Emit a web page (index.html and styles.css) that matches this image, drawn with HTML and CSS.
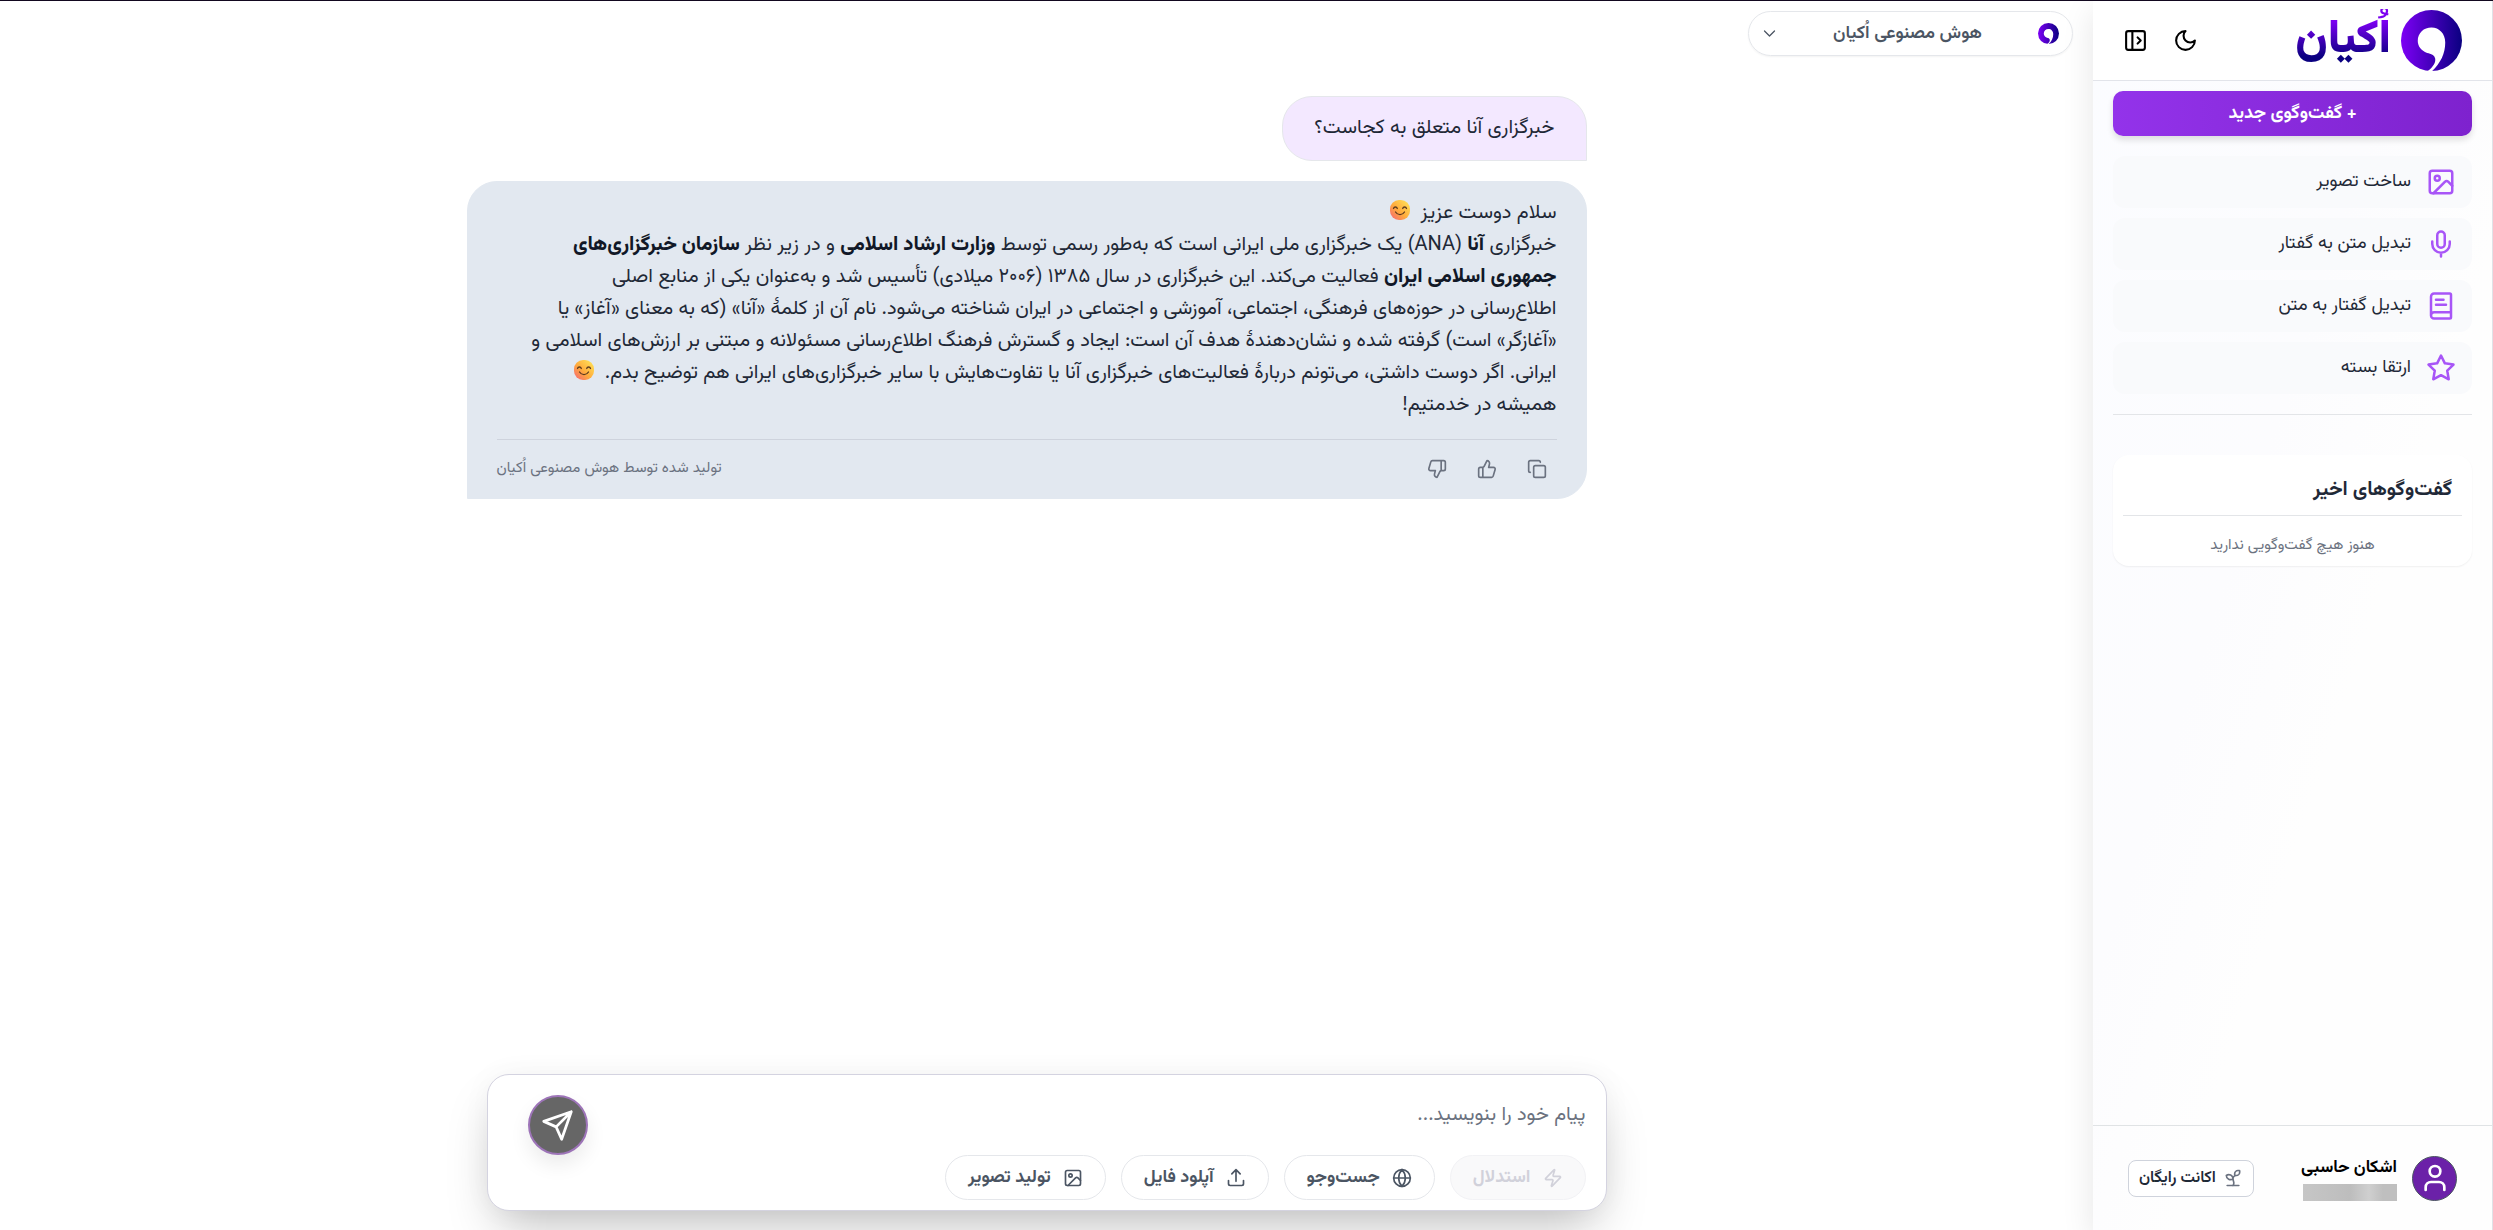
FILE: index.html
```html
<!DOCTYPE html>
<html lang="fa" dir="rtl">
<head>
<meta charset="utf-8">
<meta name="viewport" content="width=device-width, initial-scale=1">
<title>اُکیان</title>
<link rel="stylesheet" href="styles.css">
</head>
<body>
<svg class="defs" aria-hidden="true">
  <defs>
    <linearGradient id="brand" x1="0" x2="1" y1="0" y2="0"><stop offset="0" stop-color="#7d00f5"/><stop offset="1" stop-color="#0a0080"/></linearGradient>
    <linearGradient id="smile" x1="1" x2="0" y1="0" y2="1"><stop offset="0" stop-color="#ffe95a"/><stop offset=".55" stop-color="#ffab3d"/><stop offset="1" stop-color="#f5607a"/></linearGradient>
    <symbol id="logo" viewBox="0 0 182 182"><circle cx="91" cy="91" r="91" fill="url(#brand)"/><path fill="#fff" d="M91 52C114 52 132 70 132 97C132 130 118 158 93 182L80 182C96 170 104 158 102 145C100 134 90 130 78 128C60 122 50 108 50 92C50 68 68 52 91 52Z"/></symbol>
    <symbol id="emoji" viewBox="0 0 20 20"><rect x="0" y="0" width="20" height="20" rx="9" fill="url(#smile)"/><path d="M3.500 8.500c.6-2 3.200-2 3.800 0M12.700 8.500c.6-2 3.200-2 3.800 0M5.500 12c2 3.400 7 3.400 9 0" fill="none" stroke="#5c3a1e" stroke-width="1.300" stroke-linecap="round"/></symbol>
    <symbol id="image" viewBox="0 0 24 24"><rect x="3" y="3" width="18" height="18" rx="2"/><circle cx="9" cy="9" r="2"/><path d="m21 15-3.086-3.086a2 2 0 0 0-2.828 0L6 21"/></symbol>
  </defs>
</svg>
<div class="app">
  <aside class="sidebar">
    <header class="brand-bar">
      <a class="brand" href="#"><svg class="brand-mark"><use href="#logo"/></svg><span class="brand-name">اُکیان</span></a>
      <div class="brand-tools">
        <button class="tool" aria-label="حالت تیره"><svg class="icon" viewBox="0 0 24 24"><path d="M12 3a6 6 0 0 0 9 9 9 9 0 1 1-9-9Z"/></svg></button>
        <button class="tool" aria-label="بستن منو"><svg class="icon" viewBox="0 0 24 24"><rect x="3" y="3" width="18" height="18" rx="2"/><path d="M9 3v18m5-12 3 3-3 3"/></svg></button>
      </div>
    </header>
    <div class="side-body">
      <button class="new-chat">+ گفت‌وگوی جدید</button>
      <nav class="menu">
        <a class="menu-item" href="#"><svg class="icon"><use href="#image"/></svg>ساخت تصویر</a>
        <a class="menu-item" href="#"><svg class="icon" viewBox="0 0 24 24"><path d="M12 2a3 3 0 0 0-3 3v7a3 3 0 0 0 6 0V5a3 3 0 0 0-3-3Z"/><path d="M19 10v2a7 7 0 0 1-14 0v-2M12 19v3"/></svg>تبدیل متن به گفتار</a>
        <a class="menu-item" href="#"><svg class="icon" viewBox="0 0 24 24"><path d="M4 19.500v-15A2.500 2.500 0 0 1 6.500 2H19a1 1 0 0 1 1 1v18a1 1 0 0 1-1 1H6.500a1 1 0 0 1 0-5H20M8 11h8M8 7h6"/></svg>تبدیل گفتار به متن</a>
        <a class="menu-item" href="#"><svg class="icon" viewBox="0 0 24 24"><path d="M12 2l3.090 6.260L22 9.270l-5 4.870 1.180 6.880L12 17.770l-6.180 3.250L7 14.140 2 9.270l6.910-1.010z"/></svg>ارتقا بسته</a>
      </nav>
      <section class="recent">
        <h2 class="recent-title">گفت‌وگوهای اخیر</h2>
        <p class="recent-empty">هنوز هیچ گفت‌وگویی ندارید</p>
      </section>
    </div>
    <footer class="account">
      <span class="avatar"><svg class="icon" viewBox="0 0 24 24"><path d="M19 21v-2a4 4 0 0 0-4-4H9a4 4 0 0 0-4 4v2"/><circle cx="12" cy="7" r="4"/></svg></span>
      <div class="account-info"><span class="account-name">اشکان حاسبی</span><span class="account-mask"></span></div>
      <button class="plan"><svg class="icon" viewBox="0 0 24 24"><path d="M14 9.536V7a4 4 0 0 1 4-4h1.500a.5.5 0 0 1 .5.5V5a4 4 0 0 1-4 4 4 4 0 0 0-4 4c0 2 1 3 1 5a5 5 0 0 1-1 3M4 9a5 5 0 0 1 8 4 5 5 0 0 1-8-4M5 21h14"/></svg>اکانت رایگان</button>
    </footer>
  </aside>
  <main class="main">
    <div class="topbar">
      <label class="model"><svg class="model-mark"><use href="#logo"/></svg>
        <select class="model-select" aria-label="مدل"><option>هوش مصنوعی اُکیان</option></select>
        <svg class="icon chevron" viewBox="0 0 24 24"><path d="m4 8 8 8 8-8"/></svg></label>
    </div>
    <div class="thread">
      <div class="bubble bubble-user">خبرگزاری آنا متعلق به کجاست؟</div>
      <article class="bubble bubble-bot">
        <p class="answer">سلام دوست عزیز <svg class="emoji"><use href="#emoji"/></svg><br>
          خبرگزاری <strong>آنا</strong> (ANA) یک خبرگزاری ملی ایرانی است که به‌طور رسمی توسط <strong>وزارت ارشاد اسلامی</strong> و در زیر نظر <strong>سازمان خبرگزاری‌های<br>
          جمهوری اسلامی ایران</strong> فعالیت می‌کند. این خبرگزاری در سال ۱۳۸۵ (۲۰۰۶ میلادی) تأسیس شد و به‌عنوان یکی از منابع اصلی<br>
          اطلاع‌رسانی در حوزه‌های فرهنگی، اجتماعی، آموزشی و اجتماعی در ایران شناخته می‌شود. نام آن از کلمهٔ «آنا» (که به معنای «آغاز» یا<br>
          «آغازگر» است) گرفته شده و نشان‌دهندهٔ هدف آن است: ایجاد و گسترش فرهنگ اطلاع‌رسانی مسئولانه و مبتنی بر ارزش‌های اسلامی و<br>
          ایرانی. اگر دوست داشتی، می‌تونم دربارهٔ فعالیت‌های خبرگزاری آنا یا تفاوت‌هایش با سایر خبرگزاری‌های ایرانی هم توضیح بدم. <svg class="emoji"><use href="#emoji"/></svg><br>
          همیشه در خدمتیم!</p>
        <div class="answer-foot">
          <div class="reactions">
            <button class="reaction" aria-label="کپی"><svg class="icon" viewBox="0 0 24 24"><rect x="8" y="8" width="14" height="14" rx="2"/><path d="M4 16c-1.100 0-2-.9-2-2V4c0-1.100.9-2 2-2h10c1.100 0 2 .9 2 2"/></svg></button>
            <button class="reaction" aria-label="پسندیدم"><svg class="icon" viewBox="0 0 24 24"><path d="M7 10v12M15 5.880 14 10h5.830a2 2 0 0 1 1.920 2.560l-2.330 8A2 2 0 0 1 17.500 22H4a2 2 0 0 1-2-2v-8a2 2 0 0 1 2-2h2.760a2 2 0 0 0 1.790-1.110L12 2a3.130 3.130 0 0 1 3 3.880Z"/></svg></button>
            <button class="reaction" aria-label="نپسندیدم"><svg class="icon" viewBox="0 0 24 24"><path d="M17 14V2M9 18.120 10 14H4.170a2 2 0 0 1-1.920-2.560l2.330-8A2 2 0 0 1 6.500 2H20a2 2 0 0 1 2 2v8a2 2 0 0 1-2 2h-2.760a2 2 0 0 0-1.790 1.110L12 22a3.130 3.130 0 0 1-3-3.880Z"/></svg></button>
          </div>
          <span class="credit">تولید شده توسط هوش مصنوعی اُکیان</span>
        </div>
      </article>
    </div>
    <form class="composer">
      <div class="composer-main">
        <textarea class="prompt" rows="1" aria-label="پیام" placeholder="پیام خود را بنویسید..."></textarea>
        <div class="chips">
          <button type="button" class="chip" disabled><svg class="icon" viewBox="0 0 24 24"><path d="M4 14a1 1 0 0 1-.78-1.630l9.900-10.200a.5.5 0 0 1 .86.46l-1.920 6.020A1 1 0 0 0 13 10h7a1 1 0 0 1 .78 1.630l-9.900 10.200a.5.5 0 0 1-.86-.46l1.920-6.020A1 1 0 0 0 11 14z"/></svg>استدلال</button>
          <button type="button" class="chip"><svg class="icon" viewBox="0 0 24 24"><circle cx="12" cy="12" r="10"/><path d="M12 2a14.500 14.500 0 0 0 0 20 14.500 14.500 0 0 0 0-20M2 12h20"/></svg>جست‌وجو</button>
          <button type="button" class="chip"><svg class="icon" viewBox="0 0 24 24"><path d="M21 15v4a2 2 0 0 1-2 2H5a2 2 0 0 1-2-2v-4M17 7l-5-5-5 5M12 2v14"/></svg>آپلود فایل</button>
          <button type="button" class="chip"><svg class="icon"><use href="#image"/></svg>تولید تصویر</button>
        </div>
      </div>
      <button type="button" class="send" aria-label="ارسال"><svg class="icon" viewBox="0 0 24 24"><path d="m22 2-7 20-4-9-9-4ZM22 2 11 13"/></svg></button>
    </form>
  </main>
</div>
</body>
</html>
```
FILE: styles.css
```css
* { box-sizing: border-box; }
body {
  margin: 0;
  min-height: 100vh;
  display: flex;
  border-top: 1px solid #12081f;
  background: #fff;
  color: #1f2937;
  font-family: Vazirmatn, "Noto Sans Arabic", "DejaVu Sans Condensed", "DejaVu Sans", sans-serif;
  font-size: 18px;
  overflow: hidden;
}
button, select, textarea { font: inherit; color: inherit; }
button { border: 0; padding: 0; background: none; cursor: pointer; }
a { color: inherit; text-decoration: none; }
p, h2 { margin: 0; }
.defs { position: absolute; width: 0; height: 0; }
.icon {
  flex: none;
  width: 20px;
  height: 20px;
  fill: none;
  stroke: currentColor;
  stroke-width: 2;
  stroke-linecap: round;
  stroke-linejoin: round;
}
.app { flex: 1; display: flex; min-width: 0; }

/* Sidebar */
.sidebar {
  flex: none;
  width: 400px;
  display: flex;
  flex-direction: column;
  border-right: 1px solid #e0e2e7;
  background: linear-gradient(to bottom right, #fbfcff, #fcfcfe 40%, #fefefe 60%);
  box-shadow: 0 10px 30px rgba(0, 0, 0, .1);
}
.brand-bar {
  display: flex;
  align-items: center;
  justify-content: space-between;
  height: 80px;
  padding: 0 30px 0 17px;
  border-bottom: 1px solid #e2e4ea;
  background: #fff;
}
.brand { display: flex; align-items: center; gap: 10px; }
.brand-mark { width: 61px; height: 61px; }
.brand-name {
  font-size: 46px;
  font-weight: 900;
  line-height: 64px;
  background: linear-gradient(#7a00f0 20%, #0a0080 75%);
  background-clip: text;
  -webkit-background-clip: text;
  color: transparent;
}
.brand-tools { display: flex; color: #000; }
.tool { display: grid; place-items: center; width: 50px; height: 50px; }
.tool .icon { width: 25px; height: 25px; }
.side-body { flex: 1; padding: 10px 20px; }
.new-chat {
  display: block;
  width: 100%;
  height: 45px;
  border-radius: 10px;
  background: linear-gradient(to right, #9333ea, #7e22ce);
  color: #fff;
  font-weight: 700;
  box-shadow: 0 4px 6px rgba(0, 0, 0, .12);
}
.menu {
  display: flex;
  flex-direction: column;
  gap: 10px;
  padding: 20px 0;
  border-bottom: 1px solid #e3e5e8;
}
.menu-item {
  display: flex;
  align-items: center;
  gap: 15px;
  height: 52px;
  padding: 0 16px;
  border-radius: 12px;
  background: #f9fafc;
}
.menu-item .icon { width: 30px; height: 30px; color: #a855f7; }
.recent {
  margin-top: 40px;
  padding: 10px 10px 0;
  border-radius: 16px;
  background: #fff;
  box-shadow: 0 1px 2px rgba(0, 0, 0, .06);
}
.recent-title {
  padding: 0 10px;
  border-bottom: 1px solid #e3e5e8;
  font-size: 20px;
  line-height: 50px;
}
.recent-empty { padding-top: 10px; font-size: 15px; line-height: 40px; text-align: center; color: #6b7280; }
.account {
  display: flex;
  align-items: center;
  gap: 15px;
  height: 105px;
  padding: 0 35px;
  border-top: 1px solid #e0e3e5;
}
.avatar {
  display: grid;
  place-items: center;
  width: 45px;
  height: 45px;
  border: 1px solid #4b5563;
  border-radius: 50%;
  background: #6b21a8;
  color: #fff;
}
.avatar .icon { width: 32px; height: 32px; }
.account-info { display: flex; flex-direction: column; gap: 4px; }
.account-name { font-size: 17px; line-height: 24px; font-weight: 700; color: #000; white-space: nowrap; }
.account-mask { width: 94px; height: 17px; background: linear-gradient(to right, #c6c6c6, #bdbdbd 50%, #cfcfcf 70%, #bfbfbf 85%); }
.plan {
  display: flex;
  align-items: center;
  gap: 7px;
  height: 37px;
  margin-right: auto;
  padding: 0 10px;
  border: 1px solid #cfd3dc;
  border-radius: 8px;
  background: #fff;
  font-size: 16px;
  font-weight: 600;
  white-space: nowrap;
}
.plan .icon { color: #6b7280; }

/* Conversation */
.main { flex: 1; min-width: 0; display: flex; flex-direction: column; align-items: center; }
.topbar { align-self: stretch; display: flex; padding: 10px 20px; }
.model {
  display: flex;
  align-items: center;
  width: 325px;
  height: 45px;
  padding: 0 13px;
  border: 1px solid #e5e7eb;
  border-radius: 23px;
  color: #4b5563;
  box-shadow: 0 1px 2px rgba(0, 0, 0, .05);
}
.model-mark { width: 21px; height: 21px; }
.model-select { flex: 1; appearance: none; border: 0; background: none; font-weight: 600; text-align-last: center; }
.model .chevron { width: 15px; height: 15px; }
.thread {
  flex: 1;
  width: 100%;
  max-width: 1160px;
  padding: 30px 40px 30px 0;
  display: flex;
  flex-direction: column;
  align-items: flex-start;
  gap: 20px;
}
.bubble { border: 1px solid #e5e7eb; font-size: 20px; line-height: 32px; }
.bubble-user { padding: 15px 31px 16px; border-radius: 30px 30px 0 30px; background: #f3e8ff; }
.bubble-bot { width: 100%; padding: 15px 29px 0; border-color: #e2e8f0; border-radius: 30px 30px 30px 0; background: #e2e8f0; }
.answer strong { color: #111827; font-weight: 800; }
.emoji { width: 20px; height: 20px; margin: 0 5px; vertical-align: -2px; }
.answer-foot {
  display: flex;
  align-items: center;
  justify-content: space-between;
  margin-top: 18px;
  padding: 4px 0;
  border-top: 1px solid #ced3dd;
  color: #6b7280;
}
.reactions { display: flex; gap: 10px; }
.reaction { display: grid; place-items: center; width: 40px; height: 50px; }
.credit { font-size: 15px; }

/* Composer */
.composer {
  display: flex;
  align-items: flex-start;
  width: 100%;
  max-width: 1120px;
  margin-bottom: 19px;
  padding: 20px 20px 10px 40px;
  border: 1px solid #d4d3e0;
  border-radius: 22px;
  background: #fff;
  box-shadow: 0 25px 50px -12px rgba(0, 0, 0, .25), 0 0 30px rgba(0, 0, 0, .04);
}
.composer-main { flex: 1; }
.prompt {
  display: block;
  width: 100%;
  height: 40px;
  padding: 0;
  border: 0;
  outline: 0;
  resize: none;
  background: none;
  font-size: 20px;
  line-height: 40px;
}
.prompt::placeholder { color: #6b7280; }
.chips { display: flex; gap: 15px; padding-top: 20px; }
.chip {
  display: flex;
  align-items: center;
  gap: 12px;
  height: 45px;
  padding: 0 22px;
  border: 1px solid #e5e7eb;
  border-radius: 23px;
  color: #4b5563;
  font-weight: 700;
}
.chip:disabled { background: #f9f9fa; border-color: #f2f2f5; color: #d1d1da; }
.send {
  display: grid;
  place-items: center;
  width: 60px;
  height: 60px;
  border: 2px solid #9d74b8;
  border-radius: 50%;
  background: #666;
  color: #fff;
  box-shadow: 0 10px 20px rgba(0, 0, 0, .08);
}
.send .icon { width: 33px; height: 33px; }
```
